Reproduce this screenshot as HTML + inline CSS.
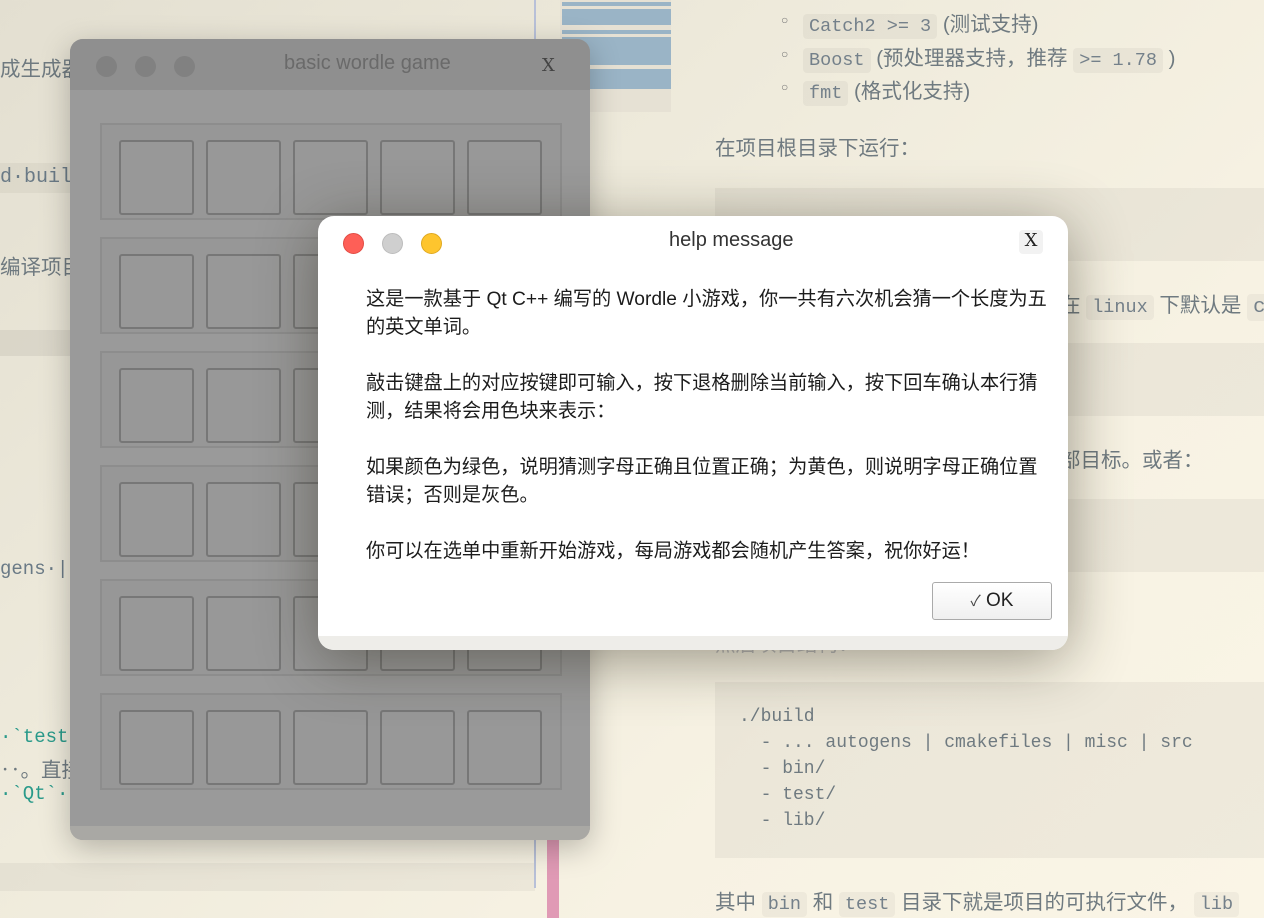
<!DOCTYPE html>
<html><head><meta charset="utf-8"><style>
*{margin:0;padding:0;box-sizing:border-box}
body{width:1264px;height:918px;overflow:hidden;position:relative;background:linear-gradient(135deg,#e3dfd1 0%,#efebdc 40%,#f7f2e3 70%,#faf5e6 100%);font-family:"Liberation Sans","Noto Sans CJK SC",sans-serif}
.a{position:absolute}
.gt{color:#6f7a80;font-size:20.5px;white-space:nowrap;font-family:"Liberation Sans","Noto Sans CJK SC",sans-serif}
.mono{font-family:"Liberation Mono","Noto Sans CJK SC",monospace}
.code{background:rgba(0,0,0,0.04);border-radius:4px;padding:2px 6px;font-family:"Liberation Mono",monospace;color:#74808a}
.win{left:70px;top:39px;width:520px;height:801px;border-radius:13px;background:#9a9a9a;overflow:hidden;box-shadow:0 8px 30px rgba(0,0,0,0.25)}
.row{position:absolute;left:30px;width:462px;height:97px;border:2px solid #8d8d8d;background:#979797}
.tile{position:absolute;top:15px;width:75px;height:75px;border:2px solid #777;border-radius:3px;background:#989898}
.dot{position:absolute;width:21px;height:21px;border-radius:50%}
.dlg{left:318px;top:216px;width:750px;height:434px;border-radius:16px;background:#fff;overflow:hidden;box-shadow:0 10px 60px rgba(40,35,20,0.45)}
.p{position:absolute;left:48px;font-size:19.2px;color:#1c1c1c;line-height:28px;white-space:nowrap;font-family:"Liberation Sans","Noto Sans CJK SC",sans-serif}
</style></head><body>
<div class="a gt" style="left:0;top:52px">成生成器</div>
<div class="a" style="left:0;top:163px;width:160px;height:30px;background:rgba(0,0,0,0.04)"></div>
<div class="a mono" style="left:0;top:166px;font-size:20px;color:#6a7a86">d·build</div>
<div class="a gt" style="left:0;top:250px">编译项目,</div>
<div class="a" style="left:0;top:330px;width:80px;height:26px;background:rgba(0,0,0,0.06)"></div>
<div class="a mono" style="left:0;top:558px;font-size:19px;color:#6a7a86">gens·|·</div>
<div class="a mono" style="left:0;top:726px;font-size:19px;color:#2a9a8a">·`test`</div>
<div class="a gt" style="left:0;top:753px">‥。直接运</div>
<div class="a mono" style="left:0;top:783px;font-size:19px;color:#2a9a8a">·`Qt`·</div>
<div class="a" style="left:0;top:863px;width:535px;height:28px;background:rgba(0,0,0,0.04)"></div>
<div class="a" style="left:534px;top:0;width:2px;height:888px;background:#b8c0d8"></div>
<div class="a" style="left:547px;top:826px;width:12px;height:92px;background:#e09ab5"></div>
<div class="a" style="left:560px;top:0;width:111px;height:112px;background:#e6e1d4"></div>
<div class="a" style="left:562px;top:2px;width:109px;height:4px;background:#9ab4c6"></div>
<div class="a" style="left:562px;top:9px;width:109px;height:16px;background:#9ab4c6"></div>
<div class="a" style="left:562px;top:30px;width:109px;height:4px;background:#9ab4c6"></div>
<div class="a" style="left:562px;top:37px;width:109px;height:28px;background:#9ab4c6"></div>
<div class="a" style="left:562px;top:69px;width:109px;height:20px;background:#9ab4c6"></div>
<div class="a" style="left:781px;top:13px;color:#777;font-size:12px">○</div>
<div class="a" style="left:781px;top:47px;color:#777;font-size:12px">○</div>
<div class="a" style="left:781px;top:80px;color:#777;font-size:12px">○</div>
<div class="a gt" style="left:803px;top:7px"><span class="code" style="font-size:18.5px">Catch2 &gt;= 3</span> (测试支持)</div>
<div class="a gt" style="left:803px;top:41px"><span class="code" style="font-size:18.5px">Boost</span> (预处理器支持，推荐 <span class="code" style="font-size:18.5px">&gt;= 1.78</span> )</div>
<div class="a gt" style="left:803px;top:74px"><span class="code" style="font-size:18.5px">fmt</span> (格式化支持)</div>
<div class="a gt" style="left:715px;top:131px">在项目根目录下运行：</div>
<div class="a" style="left:715px;top:188px;width:549px;height:73px;background:rgba(0,0,0,0.045)"></div>
<div class="a gt" style="left:1060px;top:288px">在 <span class="code" style="font-size:18.5px">linux</span> 下默认是 <span class="code">c</span></div>
<div class="a" style="left:715px;top:343px;width:549px;height:73px;background:rgba(0,0,0,0.045)"></div>
<div class="a gt" style="left:1060px;top:443px">部目标。或者：</div>
<div class="a" style="left:715px;top:499px;width:549px;height:73px;background:rgba(0,0,0,0.045)"></div>
<div class="a gt" style="left:715px;top:627px;color:#bbb">然后项目结构：</div>
<div class="a" style="left:715px;top:682px;width:549px;height:176px;background:rgba(0,0,0,0.045)"></div>
<pre class="a mono" style="left:739px;top:704px;font-size:18px;line-height:26px;color:#6f7a80">./build
  - ... autogens | cmakefiles | misc | src
  - bin/
  - test/
  - lib/</pre>
<div class="a gt" style="left:715px;top:885px">其中 <span class="code" style="font-size:18.5px">bin</span> 和 <span class="code" style="font-size:18.5px">test</span> 目录下就是项目的可执行文件， <span class="code" style="font-size:18.5px">lib</span></div>
<div class="a win">
 <div class="a" style="left:0;top:0;width:520px;height:51px;background:#8f8f8f"></div>
 <div class="dot" style="left:26px;top:17px;background:#818181"></div>
 <div class="dot" style="left:65px;top:17px;background:#818181"></div>
 <div class="dot" style="left:104px;top:17px;background:#818181"></div>
 <div class="a" style="left:214px;top:13px;font-size:20px;color:#6a6a6a">basic wordle game</div>
 <div class="a" style="left:472px;top:16px;font-size:18px;color:#444;font-family:'DejaVu Serif',serif">X</div>
 <div class="row" style="top:84px"><div class="tile" style="left:17px"></div><div class="tile" style="left:104px"></div><div class="tile" style="left:191px"></div><div class="tile" style="left:278px"></div><div class="tile" style="left:365px"></div></div>
 <div class="row" style="top:198px"><div class="tile" style="left:17px"></div><div class="tile" style="left:104px"></div><div class="tile" style="left:191px"></div><div class="tile" style="left:278px"></div><div class="tile" style="left:365px"></div></div>
 <div class="row" style="top:312px"><div class="tile" style="left:17px"></div><div class="tile" style="left:104px"></div><div class="tile" style="left:191px"></div><div class="tile" style="left:278px"></div><div class="tile" style="left:365px"></div></div>
 <div class="row" style="top:426px"><div class="tile" style="left:17px"></div><div class="tile" style="left:104px"></div><div class="tile" style="left:191px"></div><div class="tile" style="left:278px"></div><div class="tile" style="left:365px"></div></div>
 <div class="row" style="top:540px"><div class="tile" style="left:17px"></div><div class="tile" style="left:104px"></div><div class="tile" style="left:191px"></div><div class="tile" style="left:278px"></div><div class="tile" style="left:365px"></div></div>
 <div class="row" style="top:654px"><div class="tile" style="left:17px"></div><div class="tile" style="left:104px"></div><div class="tile" style="left:191px"></div><div class="tile" style="left:278px"></div><div class="tile" style="left:365px"></div></div>
 <div class="a" style="left:0;top:787px;width:520px;height:14px;background:#a9a8a4"></div>
</div>
<div class="a dlg">
 <div class="dot" style="left:25px;top:17px;background:#fe5f57;border:1px solid #e24b43"></div>
 <div class="dot" style="left:64px;top:17px;background:#cfcfcf;border:1px solid #bcbcbc"></div>
 <div class="dot" style="left:103px;top:17px;background:#fec52e;border:1px solid #e0a920"></div>
 <div class="a" style="left:351px;top:13px;font-size:20px;color:#333">help message</div>
 <div class="a" style="left:701px;top:14px;width:24px;height:24px;border-radius:4px;background:#f2f2f2;font-size:18px;color:#222;text-align:center;font-family:'DejaVu Serif',serif">X</div>
 <div class="p" style="top:70px">这是一款基于 Qt C++ 编写的 Wordle 小游戏，你一共有六次机会猜一个长度为五<br>的英文单词。</div>
 <div class="p" style="top:154px">敲击键盘上的对应按键即可输入，按下退格删除当前输入，按下回车确认本行猜<br>测，结果将会用色块来表示：</div>
 <div class="p" style="top:238px">如果颜色为绿色，说明猜测字母正确且位置正确；为黄色，则说明字母正确位置<br>错误；否则是灰色。</div>
 <div class="p" style="top:322px">你可以在选单中重新开始游戏，每局游戏都会随机产生答案，祝你好运！</div>
 <div class="a" style="left:614px;top:366px;width:120px;height:38px;border:1px solid #aaa;border-radius:3px;background:linear-gradient(#fff,#f0f0f0);text-align:center;line-height:36px;font-size:19px;color:#222"><span style="font-size:15px;color:#444">✓</span> OK</div>
 <div class="a" style="left:0;top:420px;width:750px;height:14px;background:#eeede9"></div>
</div>
</body></html>
